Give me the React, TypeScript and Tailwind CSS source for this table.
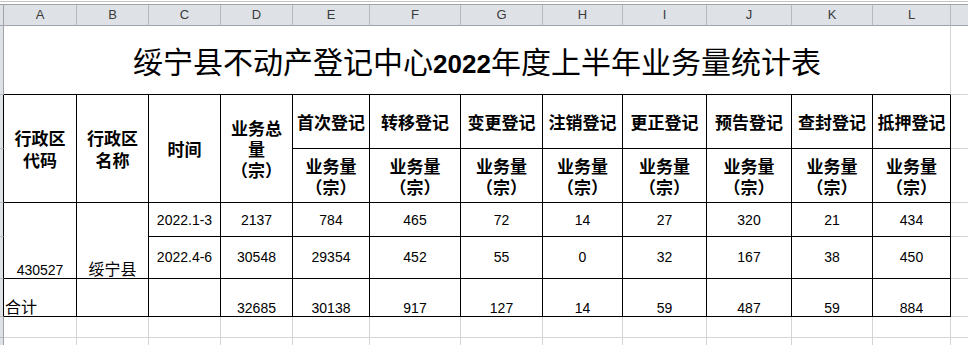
import React from "react";

const letters = ["A", "B", "C", "D", "E", "F", "G", "H", "I", "J", "K", "L"];
const kinds = ["首次登记", "转移登记", "变更登记", "注销登记", "更正登记", "预告登记", "查封登记", "抵押登记"];

const q1 = [2137, 784, 465, 72, 14, 27, 320, 21, 434];
const q2 = [30548, 29354, 452, 55, 0, 32, 167, 38, 450];
const total = [32685, 30138, 917, 127, 14, 59, 487, 59, 884];

const cjk = "font-['Noto_Sans_CJK_SC',sans-serif]";
const tb = "border-r border-b border-black";
const gr = "border-r border-b border-[#d4d4d4]";

const RowHead: React.FC<{ dark?: boolean }> = ({ dark }) => (
  <div
    className={`bg-[#dee2e7] border-b border-[#b9bec4] border-r ${dark ? "border-r-black" : "border-r-[#9fa4aa]"}`}
  />
);

const Edge: React.FC = () => <div className="border-b border-[#d4d4d4]" />;

const App: React.FC = () => {
  return (
    <div className="w-[968px] h-[345px] overflow-hidden bg-white text-black font-['Liberation_Sans','Noto_Sans_CJK_SC',sans-serif]">
      <div className="h-px bg-white" />
      <div className="h-px bg-[#c4c4c4]" />
      <div className="h-[2px] bg-white" />
      <div className="h-px bg-[#a3a3a3]" />

      <div className="grid grid-cols-[4px_73px_72px_72px_72px_77px_91px_82px_80px_84px_85px_81px_78px_1fr] grid-rows-[21px_69px_54px_54px_34px_42px_38px_21px_21px]">
        {/* column letters */}
        <div className="bg-[#dee2e7] border-r border-b border-[#9fa4aa]" />
        {letters.map((l) => (
          <div
            key={l}
            className="bg-[#dee2e7] border-r border-r-[#b4b9bf] border-b border-b-[#9fa4aa] flex items-center justify-center text-[13px] text-[#3a3a3a]"
          >
            {l}
          </div>
        ))}
        <div className="bg-[#dee2e7] border-b border-[#9fa4aa]" />

        {/* title */}
        <RowHead />
        <div className="col-span-12 border-r border-r-[#d4d4d4] border-b border-b-black flex items-center justify-center pt-[3px]">
          <span className={`${cjk} text-[30px] leading-[36px]`}>
            绥宁县不动产登记中心
            <span className="font-['Liberation_Sans',sans-serif] font-bold text-[26px]">2022</span>
            年度上半年业务量统计表
          </span>
        </div>
        <Edge />

        {/* table head */}
        <RowHead dark />
        <div className={`${tb} ${cjk} row-span-2 flex flex-col items-center justify-center font-bold text-[17px] leading-[22px]`}>
          <span>行政区</span>
          <span>代码</span>
        </div>
        <div className={`${tb} ${cjk} row-span-2 flex flex-col items-center justify-center font-bold text-[17px] leading-[22px]`}>
          <span>行政区</span>
          <span>名称</span>
        </div>
        <div className={`${tb} ${cjk} row-span-2 flex items-center justify-center font-bold text-[17px]`}>时间</div>
        <div className={`${tb} ${cjk} row-span-2 flex flex-col items-center justify-center font-bold text-[17px] leading-[21px]`}>
          <span>业务总</span>
          <span>量</span>
          <span>（宗）</span>
        </div>
        {kinds.map((k) => (
          <div key={k} className={`${tb} ${cjk} flex items-center justify-center font-bold text-[17px]`}>
            {k}
          </div>
        ))}
        <Edge />

        <RowHead dark />
        {kinds.map((k) => (
          <div key={k} className={`${tb} ${cjk} flex flex-col items-center justify-center font-bold text-[17px] leading-[21px]`}>
            <span>业务量</span>
            <span>（宗）</span>
          </div>
        ))}
        <Edge />

        {/* data */}
        <RowHead dark />
        <div className={`${tb} row-span-2 flex items-end justify-center text-[14px] leading-[16px]`}>430527</div>
        <div className={`${tb} ${cjk} row-span-2 flex items-end justify-center text-[16px] leading-[20px]`}>绥宁县</div>
        <div className={`${tb} flex items-center justify-center text-[14px] pt-[2px]`}>2022.1-3</div>
        {q1.map((n, i) => (
          <div key={i} className={`${tb} flex items-center justify-center text-[14px] pt-[2px]`}>
            {n}
          </div>
        ))}
        <Edge />

        <RowHead dark />
        <div className={`${tb} flex items-center justify-center text-[14px]`}>2022.4-6</div>
        {q2.map((n, i) => (
          <div key={i} className={`${tb} flex items-center justify-center text-[14px]`}>
            {n}
          </div>
        ))}
        <Edge />

        <RowHead dark />
        <div className={`${tb} ${cjk} flex items-end pl-[1px] text-[16px] leading-[20px]`}>合计</div>
        <div className={tb} />
        <div className={tb} />
        {total.map((n, i) => (
          <div key={i} className={`${tb} flex items-end justify-center text-[14px] leading-[16px]`}>
            {n}
          </div>
        ))}
        <Edge />

        {/* empty rows */}
        {[0, 1].map((r) => (
          <React.Fragment key={r}>
            <RowHead />
            {letters.map((l) => (
              <div key={l} className={gr} />
            ))}
            <Edge />
          </React.Fragment>
        ))}
      </div>
    </div>
  );
};

export default App;
